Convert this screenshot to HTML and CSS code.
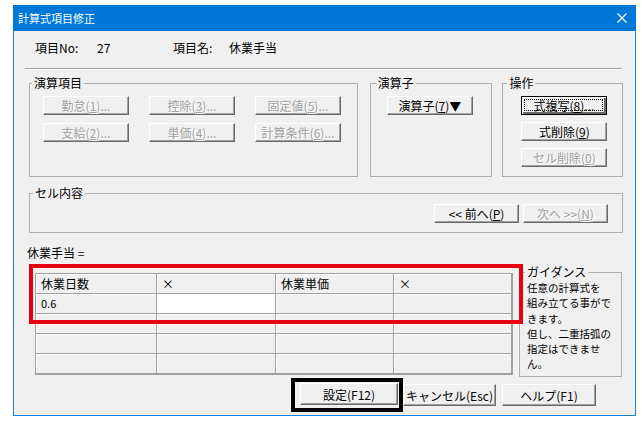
FILE: index.html
```html
<!DOCTYPE html>
<html>
<head>
    <title>計算式項目修正</title>
    <link rel="stylesheet" href="styles.css">
</head>
<body>
    <div class="window">
        <div class="titlebar">
            <span>計算式項目修正</span>
            <svg class="close" width="10" height="10" viewBox="0 0 10 10"><path d="M0.5 0.5L9.5 9.5M9.5 0.5L0.5 9.5" stroke="#fff" stroke-width="1.1" fill="none"/></svg>
        </div>
        <div class="content">
            <div class="info">
                <span class="info-label">項目No:</span><span class="info-value">27</span>
                <span class="info-label2">項目名:</span><span>休業手当</span>
            </div>
            <div class="sep"></div>

            <div class="groups">
                <fieldset class="group g-items">
                    <legend>演算項目</legend>
                    <div class="group-body items-body">
                        <button class="btn off">勤怠(<u>1</u>)...</button>
                        <button class="btn off">控除(<u>3</u>)...</button>
                        <button class="btn off">固定値(<u>5</u>)...</button>
                        <button class="btn off">支給(<u>2</u>)...</button>
                        <button class="btn off">単価(<u>4</u>)...</button>
                        <button class="btn off">計算条件(<u>6</u>)...</button>
                    </div>
                </fieldset>
                <fieldset class="group g-op">
                    <legend>演算子</legend>
                    <div class="group-body op-body">
                        <button class="btn">演算子(<u>7</u>)▼</button>
                    </div>
                </fieldset>
                <fieldset class="group g-act">
                    <legend>操作</legend>
                    <div class="group-body act-body">
                        <button class="btn focus"><span class="focus-rect">式複写(<u>8</u>)...</span></button>
                        <button class="btn">式削除(<u>9</u>)</button>
                        <button class="btn off">セル削除(<u>0</u>)</button>
                    </div>
                </fieldset>
            </div>

            <fieldset class="group g-cell">
                <legend>セル内容</legend>
                <div class="group-body cell-body">
                    <button class="btn nav">&lt;&lt; 前へ(<u>P</u>)</button>
                    <button class="btn nav off">次へ &gt;&gt;(<u>N</u>)</button>
                </div>
            </fieldset>

            <div class="formula">休業手当 =</div>

            <div class="work">
                <div class="grid-wrap">
                    <div class="grid">
                        <div class="cell">休業日数</div>
                        <div class="cell">×</div>
                        <div class="cell">休業単価</div>
                        <div class="cell">×</div>
                        <div class="cell small">0.6</div>
                        <div class="cell edit"></div>
                        <div class="cell"></div>
                        <div class="cell"></div>
                        <div class="cell"></div>
                        <div class="cell"></div>
                        <div class="cell"></div>
                        <div class="cell"></div>
                        <div class="cell"></div>
                        <div class="cell"></div>
                        <div class="cell"></div>
                        <div class="cell"></div>
                        <div class="cell"></div>
                        <div class="cell"></div>
                        <div class="cell"></div>
                        <div class="cell"></div>
                    </div>
                    <div class="highlight"></div>
                </div>
                <fieldset class="group g-guide">
                    <legend>ガイダンス</legend>
                    <div class="group-body guide-body">任意の計算式を<br>組み立てる事がで<br>きます。<br>但し、二重括弧の<br>指定はできませ<br>ん。</div>
                </fieldset>
            </div>

            <div class="footer">
                <div class="mark">
                    <button class="btn big b-ok">設定(F12)</button>
                </div>
                <button class="btn big b-cancel">キャンセル(Esc)</button>
                <button class="btn big b-help">ヘルプ(F1)</button>
            </div>
        </div>
    </div>
</body>
</html>
```

FILE: styles.css
```css
body {
    margin: 0;
    background: #fff;
    font-family: "Noto Sans CJK JP", sans-serif;
    font-size: 12px;
    color: #000;
}
.window {
    box-sizing: border-box;
    width: 623px;
    height: 411px;
    margin: 5px 0 0 13px;
    background: #f0f0f0;
    border: 1px solid #1883d7;
    border-top: none;
}
.titlebar {
    display: flex;
    align-items: center;
    justify-content: space-between;
    height: 26px;
    margin: 0 -1px;
    padding: 0 9px 0 5px;
    background: #0078d7;
    color: #fff;
    font-size: 11px;
}
.close {
    display: block;
}
.content {
    padding: 0 12px 0 15px;
}
.info {
    display: flex;
    padding: 9px 0 0 6px;
    line-height: 16px;
}
.info-label {
    width: 62px;
}
.info-value {
    width: 76px;
}
.info-label2 {
    width: 56px;
}
.sep {
    margin: 12px 1px 0 -4px;
    border-top: 1px solid #a0a0a0;
    border-bottom: 1px solid #fff;
}
.groups {
    display: flex;
    margin-top: 6px;
}
.group {
    box-sizing: border-box;
    min-width: 0;
    margin: 0;
    padding: 0;
    border: 1px solid #adadad;
}
.group legend {
    margin-left: 2px;
    padding: 0 2px;
    line-height: 14px;
}
.g-items {
    width: 330px;
}
.g-op {
    width: 123px;
    margin-left: 12px;
}
.g-act {
    width: 121px;
    margin-left: 10px;
}
.g-act legend {
    margin-left: 4px;
}
.g-op legend {
    margin-left: 5px;
}
.group-body {
    box-sizing: border-box;
}
.items-body {
    display: grid;
    grid-template-columns: 86px 86px 86px;
    grid-auto-rows: 19px;
    column-gap: 20px;
    row-gap: 8px;
    height: 86px;
    padding: 6px 0 0 13px;
}
.op-body {
    height: 86px;
    padding: 6px 0 0 16px;
}
.act-body {
    display: flex;
    flex-direction: column;
    gap: 7px;
    height: 86px;
    padding: 6px 0 0 18px;
}
.btn {
    box-sizing: border-box;
    display: block;
    width: 86px;
    height: 19px;
    margin: 0;
    padding: 0;
    font-family: inherit;
    font-size: 12px;
    line-height: 16px;
    color: #000;
    background: #f0f0f0;
    border: 1px solid;
    border-color: #fff #696969 #696969 #fff;
    box-shadow: inset -1px -1px #a0a0a0;
    text-align: center;
    white-space: nowrap;
}
.btn.off {
    color: #a0a0a0;
    text-shadow: 1px 1px 0 #fff;
}
.btn.focus {
    padding: 2px 3px 3px 2px;
    border-color: #000;
    box-shadow: inset 1px 1px #fff, inset -2px -2px #696969;
}
.focus-rect {
    display: block;
    height: 100%;
    box-sizing: border-box;
    border: 1px dotted #000;
    line-height: 11px;
}
.g-cell {
    margin-top: 9px;
}
.g-cell legend {
    margin-left: 3px;
}
.cell-body {
    display: flex;
    justify-content: flex-end;
    gap: 4px;
    height: 32px;
    padding: 4px 14px 0 0;
}
.btn.nav {
    width: 85px;
}
.formula {
    margin: 13px 0 0 -2px;
    line-height: 14px;
}
.work {
    display: flex;
    align-items: flex-start;
}
.grid-wrap {
    position: relative;
    margin: 13px 0 0 6px;
}
.grid {
    display: grid;
    grid-template-columns: 121px 119px 118px 118px;
    grid-auto-rows: 20px;
    border: 1px solid #a0a0a0;
}
.cell {
    box-sizing: border-box;
    padding-left: 5px;
    border-right: 1px solid #a0a0a0;
    border-bottom: 1px solid #a0a0a0;
    box-shadow: inset 1px 1px #fff;
    line-height: 19px;
    white-space: nowrap;
}
.cell.small {
    font-size: 11px;
}
.cell.edit {
    background: #fff;
}
.highlight {
    position: absolute;
    left: -6px;
    top: -9px;
    width: 494px;
    height: 60px;
    box-sizing: border-box;
    border: 4px solid #e60012;
    z-index: 1;
}
.g-guide {
    width: 103px;
    margin: 5px 0 0 6px;
}
.g-guide legend {
    margin-left: 5px;
}
.guide-body {
    height: 97px;
    padding: 1px 0 0 7px;
    font-size: 10.5px;
    line-height: 15.3px;
    white-space: nowrap;
}
.footer {
    display: flex;
    justify-content: flex-end;
    align-items: center;
    margin-top: 1px;
    padding-right: 27px;
}
.mark {
    display: flex;
    padding: 1px 1px 3px 5px;
    border: 4px solid #000;
}
.btn.big {
    height: 22px;
    line-height: 19px;
}
.b-ok {
    width: 98px;
}
.b-cancel {
    width: 93px;
}
.b-help {
    width: 94px;
    margin-left: 6px;
}
```
